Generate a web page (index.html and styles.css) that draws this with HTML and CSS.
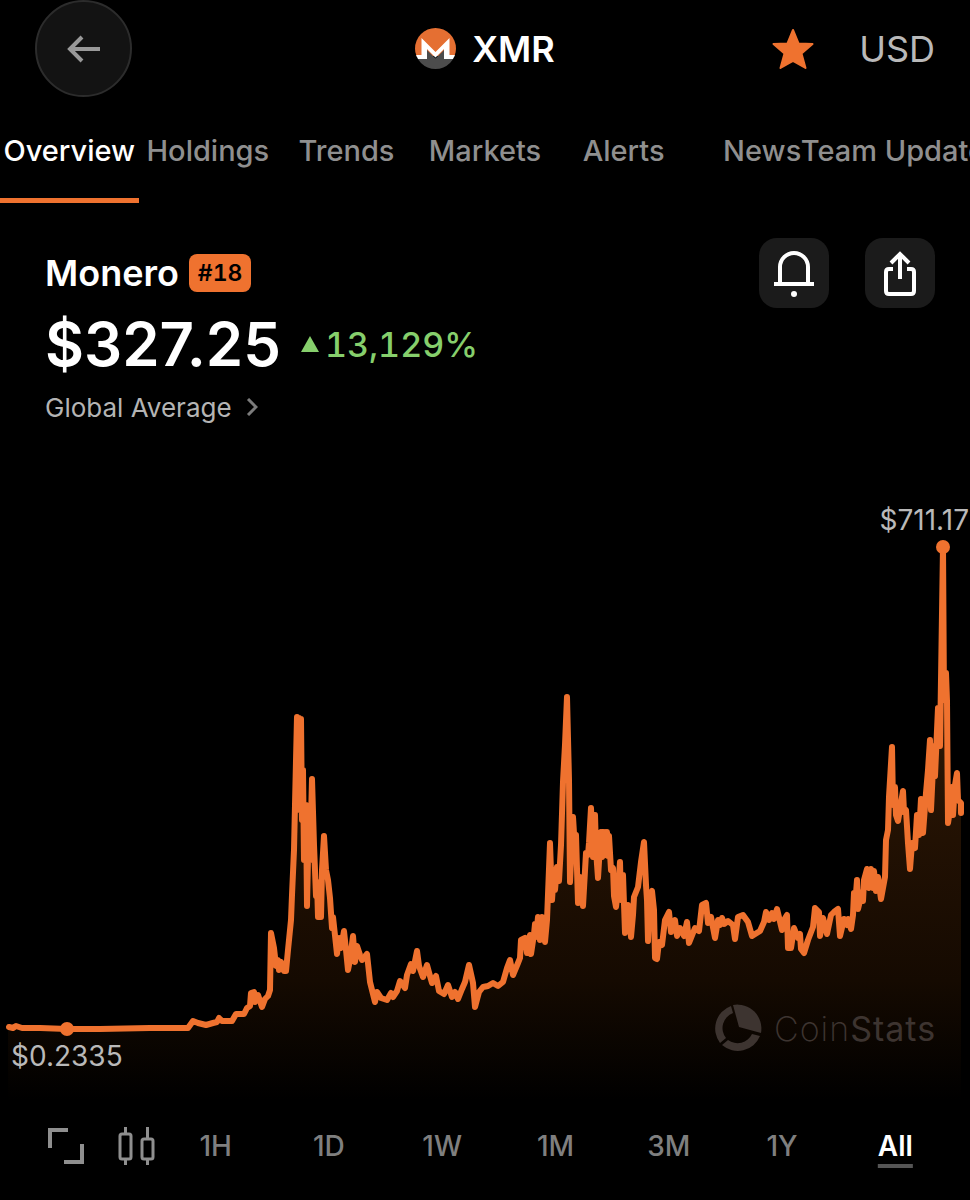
FILE: index.html
```
<!DOCTYPE html>
<html lang="en">
  <head>
    <meta charset="UTF-8" />
    <meta name="viewport" content="width=device-width, initial-scale=1.0" />
    <title>Monero (XMR)</title>
    <link rel="stylesheet" href="styles.css">
  </head>

  <body>
    <header class="topbar">
      <button type="button" class="back" aria-label="Back">
        <svg width="34" height="28" viewBox="0 0 34 28" fill="none" stroke="currentColor" stroke-width="4">
          <path d="M33 14H3M15 2L3 14l12 12" />
        </svg>
      </button>
      <h1 class="coin">
        <svg width="41" height="41" viewBox="0 0 41 41" aria-hidden="true">
          <defs>
            <clipPath id="coinClip"><circle cx="20.5" cy="20.5" r="20.5" /></clipPath>
          </defs>
          <g clip-path="url(#coinClip)">
            <path fill="#e56f32" d="M0 0h41v28H0z" />
            <path fill="#4c4c4c" d="M0 31h11V21l9.500 9.500L30 21v10h11v10H0z" />
            <path fill="#fff" d="M0 27h6.500V10l14 14 14-14v17H41v4H29V21l-8.500 8.500L12 21v10H0z" />
          </g>
        </svg>
        XMR
      </h1>
      <div class="topbar-actions">
        <button type="button" class="favorite" aria-label="Favorite">
          <svg width="42" height="42" viewBox="0 0 42 42" fill="#ef722f" stroke="#ef722f" stroke-width="2" stroke-linejoin="round">
            <path d="M21 2l5.500 13.500L40.500 16 29.500 25.500 33.500 40 21 33 8.500 40l4-14.500L1.500 16l14-.5z" />
          </svg>
        </button>
        <button type="button" class="currency">USD</button>
      </div>
    </header>

    <nav class="tabs">
      <a href="#overview" class="tab active">Overview</a>
      <a href="#holdings" class="tab">Holdings</a>
      <a href="#trends" class="tab">Trends</a>
      <a href="#markets" class="tab">Markets</a>
      <a href="#alerts" class="tab">Alerts</a>
      <a href="#news" class="tab">News</a>
      <a href="#team" class="tab">Team Updates</a>
    </nav>

    <main id="overview">
      <section class="summary">
        <div class="summary-text">
          <div class="name-row">
            <h2 class="name">Monero</h2>
            <span class="rank">#18</span>
          </div>
          <div class="price-row">
            <span class="price">$327.25</span>
            <span class="change">
              <svg width="18" height="16" viewBox="0 0 18 16" fill="currentColor" aria-hidden="true">
                <path d="M9 0l9 16H0z" />
              </svg>
              13,129%
            </span>
          </div>
          <a href="#markets" class="source">
            Global Average
            <svg width="12" height="18" viewBox="0 0 12 18" fill="none" stroke="#7c7c7c" stroke-width="3" aria-hidden="true">
              <path d="M2 1l8 8-8 8" />
            </svg>
          </a>
        </div>
        <div class="summary-actions">
          <button type="button" class="square" aria-label="Set alert">
            <svg width="42" height="48" viewBox="0 0 42 48" fill="none" stroke="#fff" stroke-width="4">
              <path d="M7 34V18a14 14 0 0 1 28 0v16M1 35h40" />
              <circle cx="21" cy="45" r="3" fill="#fff" stroke="none" />
            </svg>
          </button>
          <button type="button" class="square" aria-label="Share">
            <svg width="32" height="46" viewBox="0 0 32 46" fill="none" stroke="#fff" stroke-width="4">
              <path d="M9 19H5q-3 0-3 3v19q0 3 3 3h22q3 0 3-3V22q0-3-3-3h-4M16 29V4M7 13l9-9 9 9" />
            </svg>
          </button>
        </div>
      </section>

      <svg class="chart" viewBox="0 490 970 620" role="img" aria-label="Monero price, all time">
        <defs>
          <linearGradient id="areaFill" gradientUnits="userSpaceOnUse" x1="0" y1="700" x2="0" y2="1100">
            <stop offset="0" stop-color="#2f1805" />
            <stop offset="0.700" stop-color="#150a01" />
            <stop offset="1" stop-color="#000" />
          </linearGradient>
        </defs>
        <path id="area" fill="url(#areaFill)" />
        <path id="line" class="line" />
        <circle class="marker" cx="67" cy="1029" r="7" />
        <circle class="marker" cx="943" cy="547" r="7" />
        <text class="chart-label" x="11" y="1066">$0.2335</text>
        <text class="chart-label" x="969" y="530" text-anchor="end">$711.17</text>
        <g class="watermark">
          <path d="M733 1005A24 24 0 0 1 761 1033L739 1027Z" />
          <path d="M731 1006A24 24 0 0 0 720 1043L726 1038A16 16 0 0 1 733 1013Z" />
          <path d="M722 1045A24 24 0 0 0 760 1036L752 1034A16 16 0 0 1 728 1040Z" />
          <text x="774" y="1041"><tspan class="thin">Coin</tspan>Stats</text>
        </g>
      </svg>

      <div class="toolbar">
        <button type="button" class="tool" aria-label="Full screen">
          <svg width="36" height="36" viewBox="0 0 36 36" fill="none" stroke="currentColor" stroke-width="4">
            <path d="M2 20V2h18M16 34h18V16" />
          </svg>
        </button>
        <button type="button" class="tool" aria-label="Candles">
          <svg width="37" height="40" viewBox="0 0 37 40" fill="none" stroke="currentColor" stroke-width="3">
            <rect x="2" y="8" width="11" height="25" rx="2" />
            <rect x="24" y="13" width="11" height="20" rx="2" />
            <path d="M7.500 1v7M7.500 33v6M29.500 1v12M29.500 33v6" />
          </svg>
        </button>
        <div class="ranges">
          <button type="button" class="range">1H</button>
          <button type="button" class="range">1D</button>
          <button type="button" class="range">1W</button>
          <button type="button" class="range">1M</button>
          <button type="button" class="range">3M</button>
          <button type="button" class="range">1Y</button>
          <button type="button" class="range selected">All</button>
        </div>
      </div>
    </main>

    <script src="chart.js"></script>
  </body>
</html>
```
FILE: styles.css
```
* {
  box-sizing: border-box;
}

body {
  margin: 0;
  background-color: #000;
  color: #fff;
  font-family: Inter, "Liberation Sans", sans-serif;
}

button {
  padding: 0;
  border: none;
  background: none;
  color: inherit;
  font-family: inherit;
  cursor: pointer;
}

a {
  color: inherit;
  text-decoration: none;
}

svg {
  display: block;
  flex: none;
}

.topbar {
  display: grid;
  grid-template-columns: 1fr auto 1fr;
  align-items: center;
  padding: 0 35px;
}

.back {
  display: flex;
  align-items: center;
  justify-content: center;
  width: 97px;
  height: 97px;
  border: 2px solid #2c2c2c;
  border-radius: 50%;
  background-color: #131313;
  color: #999;
}

.coin {
  display: flex;
  align-items: center;
  gap: 16px;
  margin: 0;
  font-size: 36px;
  font-weight: 600;
}

.topbar-actions {
  display: flex;
  align-items: center;
  justify-content: flex-end;
  gap: 45px;
}

.currency {
  color: #b9b9b9;
  font-size: 36px;
}

.tabs {
  display: flex;
  margin-top: 26px;
  overflow: hidden;
}

.tab {
  display: flex;
  flex: 1 1 0;
  justify-content: center;
  min-width: 0;
  height: 80px;
  padding-top: 10px;
  border-bottom: 5px solid transparent;
  color: #8f8f8f;
  font-size: 29px;
  font-weight: 500;
  line-height: 36px;
  white-space: nowrap;
}

.tab.active {
  border-color: #ef722f;
  color: #fff;
}

.summary {
  display: flex;
  justify-content: space-between;
  padding: 35px 35px 0 45px;
}

.name-row {
  display: flex;
  align-items: center;
  gap: 10px;
  height: 70px;
}

.name {
  margin: 0;
  font-size: 36px;
  font-weight: 600;
}

.rank {
  padding: 0 9px;
  border-radius: 8px;
  background-color: #ef722f;
  color: #000;
  font-size: 23px;
  font-weight: 600;
  font-variant-numeric: tabular-nums;
  line-height: 38px;
}

.price-row {
  display: flex;
  align-items: center;
  gap: 20px;
  height: 72px;
}

.price {
  font-size: 60px;
  font-weight: 600;
}

.change {
  display: flex;
  align-items: center;
  gap: 6px;
  color: #86cf6c;
  font-size: 34px;
  font-weight: 500;
  font-variant-numeric: tabular-nums;
}

.source {
  display: flex;
  align-items: center;
  gap: 14px;
  height: 54px;
  color: #b4b4b4;
  font-size: 26px;
}

.summary-actions {
  display: flex;
  gap: 36px;
}

.square {
  display: flex;
  align-items: center;
  justify-content: center;
  width: 70px;
  height: 70px;
  border-radius: 18px;
  background-color: #1b1b1b;
}

.chart {
  width: 100%;
  height: auto;
  margin-top: 56px;
}

.line {
  fill: none;
  stroke: #ef722f;
  stroke-width: 6;
  stroke-linejoin: round;
  stroke-linecap: round;
}

.marker {
  fill: #ef722f;
}

.chart-label {
  fill: #b9b9b9;
  font-size: 28px;
}

.watermark {
  fill: #3d3430;
  font-size: 34px;
  letter-spacing: 1px;
}

.thin {
  font-weight: 200;
}

.toolbar {
  display: flex;
  align-items: center;
  height: 72px;
  padding: 0 18px 0 48px;
}

.tool {
  margin-right: 34px;
  color: #8f8f8f;
}

.tool + .tool {
  margin-right: 4px;
}

.ranges {
  display: flex;
  flex: 1;
}

.range {
  flex: 1 1 0;
  color: #7f7f7f;
  font-size: 28px;
  font-weight: 500;
}

.range.selected {
  color: #fff;
  font-weight: 600;
  text-decoration: underline 4px #555;
  text-underline-offset: 8px;
}
```
FILE: chart.js
```
// price history as x,y pairs in chart units
const points = `
9,1027 13,1028 16,1026 22,1028 40,1028 67,1029 100,1029 150,1028 188,1028 193,1021
198,1023 206,1025 213,1023 217,1022 219,1018 222,1021 232,1021 236,1014 244,1014
247,1008 250,1006 251,993 254,992 255,1002 258,995 262,1007 265,999 268,996 270,990
271,933 274,948 276,966 278,960 279,970 281,962 284,971 286,971 288,950 291,920 292,895
294,850 295,805 297,717 298,805 299,718 300,810 301,719 302,820 303,770 304,860 306,805
307,906 309,810 310,860 312,779 314,845 316,896 317,882 318,917 321,917 322,870 324,836
326,870 328,880 330,898 332,928 333,917 337,954 339,938 341,948 344,931 346,950 348,970
350,960 353,936 355,962 357,946 360,955 362,960 367,954 370,982 375,1002 377,992
381,998 387,1000 391,993 393,997 397,991 400,981 405,988 407,975 411,964 413,971
417,951 419,966 423,977 427,965 430,976 432,983 436,976 439,991 444,994 448,985
452,997 455,992 458,999 462,989 465,982 469,965 473,983 475,1007 479,992 483,987
488,986 493,983 498,986 503,982 507,968 510,960 513,975 518,963 520,958 521,940
525,938 527,953 530,935 531,954 534,934 535,924 536,937 538,917 540,940 542,917
545,942 547,920 550,843 552,900 554,870 555,890 557,867 559,881 561,845 563,782
565,745 567,697 569,780 570,882 573,817 575,850 576,835 578,903 580,877 583,906
586,853 588,855 589,843 591,808 593,857 595,815 596,850 598,878 600,845 601,832
602,857 604,832 605,855 607,832 608,856 609,836 611,870 613,868 614,896 616,907
618,890 620,862 621,900 623,875 625,933 628,905 631,937 633,915 634,897 638,887
641,862 644,842 646,885 647,900 648,941 650,895 652,891 654,910 655,958 657,959
659,942 662,945 665,920 669,912 671,932 675,920 677,936 680,928 684,936 687,922
689,943 695,928 699,931 702,905 706,903 708,923 711,917 715,938 718,920 720,925
722,918 724,924 728,921 733,925 735,939 738,917 743,915 748,922 752,936 760,931
764,922 766,912 769,920 772,913 774,919 777,909 782,930 784,920 787,915 788,948
791,948 794,928 798,938 800,934 801,949 804,953 808,940 813,927 815,908 819,912
820,936 823,918 827,934 831,915 834,912 838,909 840,936 844,919 847,925 848,919
851,929 853,915 854,893 855,907 857,880 858,909 862,892 863,901 864,880 867,869
869,888 871,869 873,888 874,871 876,891 878,877 881,899 885,877 886,840 888,830
889,797 892,747 893,805 895,787 896,815 898,821 903,791 904,812 906,810 908,843
910,869 912,843 915,848 917,815 919,835 921,799 923,833 926,793 928,770 930,740
931,810 934,746 935,776 938,708 940,746 943,547 944,700 946,673 947,701 948,823
950,810 952,787 953,815 955,785 957,773 958,800 961,803 961,813
`.trim().split(/\s+/)

const line = "M" + points.join("L")

document.getElementById("line").setAttribute("d", line)
document.getElementById("area").setAttribute("d", line + "V1110H8V1027Z")
```
